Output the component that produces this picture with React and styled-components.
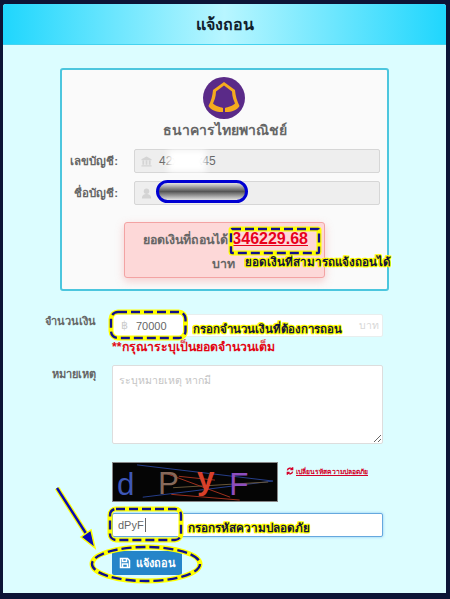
import React from "react";
import styled, { createGlobalStyle } from "styled-components";

const GlobalStyle = createGlobalStyle`
  html, body {
    margin: 0;
    padding: 0;
    background: #0c1436;
  }
  * {
    box-sizing: border-box;
  }
`;

const Page = styled.div`
  position: relative;
  width: 450px;
  height: 599px;
  padding: 4px 4px 6px 3px;
  overflow: hidden;
  font-family: "Liberation Sans", "Noto Sans", "DejaVu Sans", sans-serif;
`;

const Modal = styled.div`
  height: 100%;
  background: #dcfdff;
  border-radius: 3px 3px 0 0;
  overflow: hidden;
`;

const Header = styled.div`
  height: 41px;
  display: flex;
  align-items: center;
  justify-content: center;
  background: linear-gradient(90deg, #1fd6fd 0%, #b8f6ff 50%, #1fd6fd 100%);
  border-bottom: 1px solid #45d3ef;
  color: #10202c;
  font-size: 16px;
  font-weight: 700;
`;

const Card = styled.div`
  width: 329px;
  margin: 23px 0 0 57px;
  padding: 7px 7px 11px 0;
  background: #fafafa;
  border: 2px solid #4cc6de;
  border-radius: 3px;
`;

const Logo = styled.svg`
  display: block;
  width: 42px;
  height: 42px;
  margin: 0 auto;
  transform: translateX(3px);
`;

const BankName = styled.div`
  height: 20px;
  margin: 1px 0 9px;
  padding-left: 7px;
  text-align: center;
  color: #666;
  font-size: 14px;
  font-weight: 700;
  line-height: 20px;
`;

const InfoRow = styled.div`
  display: grid;
  grid-template-columns: 56px 1fr;
  column-gap: 16px;
  align-items: center;
  margin-bottom: 8px;
`;

const Label = styled.label`
  text-align: right;
  color: #666;
  font-size: 11.5px;
  font-weight: 700;
`;

const ReadOnlyBox = styled.div`
  position: relative;
  height: 24px;
  display: flex;
  align-items: center;
  gap: 7px;
  padding-left: 6px;
  background: #eee;
  border: 1px solid #d6d6d6;
  border-radius: 2px;
  color: #666;
  font-size: 12px;
`;

const FadedIcon = styled.svg`
  width: 11px;
  height: 11px;
  flex: none;
  fill: #d4d4d4;
`;

const WhiteSmudge = styled.div`
  position: absolute;
  left: 33px;
  top: 0;
  width: 38px;
  height: 22px;
  background: #fff;
  filter: blur(3px);
`;

const NameMask = styled.div`
  position: absolute;
  left: 21px;
  top: -2px;
  width: 92px;
  height: 23px;
  border: 3px solid #0000d2;
  border-radius: 12px;
  background: linear-gradient(180deg, #e4e4e4 0%, #555 50%, #e4e4e4 100%);
`;

const Alert = styled.div`
  position: relative;
  width: 201px;
  height: 56px;
  margin: 17px 0 0 62px;
  padding: 7px 0 0 0;
  background: #fdd8d8;
  border: 1px solid #f3a3a3;
  border-radius: 3px;
  box-shadow: 0 3px 8px rgba(240, 120, 120, 0.35);
  color: #666;
  font-size: 12.4px;
  font-weight: 700;
`;

const Balance = styled.a`
  margin-left: 4px;
  color: #e8001c;
  font-size: 16px;
  font-weight: 700;
  text-decoration: underline;
`;

const AlertLine = styled.div`
  display: flex;
  justify-content: flex-end;
  align-items: baseline;
  height: ${(p) => p.$height}px;
  padding-right: ${(p) => p.$right}px;
  white-space: nowrap;
`;

const Hint = styled.span`
  color: #14143c;
  font-size: ${(p) => p.$size}px;
  font-weight: 700;
  white-space: nowrap;
  text-shadow: 1px 0 0 #ff0, -1px 0 0 #ff0, 0 1px 0 #ff0, 0 -1px 0 #ff0,
    1px 1px 0 #ff0, -1px -1px 0 #ff0, 1px -1px 0 #ff0, -1px 1px 0 #ff0;
`;

const FloatingHint = styled(Hint)`
  position: absolute;
  left: ${(p) => p.$left}px;
  top: ${(p) => p.$top}px;
`;

const Row = styled.div`
  display: grid;
  grid-template-columns: 93px 271px;
  column-gap: 16px;
  margin-top: ${(p) => p.$top}px;
`;

const FormLabel = styled(Label)`
  padding-top: ${(p) => p.$pad || 0}px;
  font-size: 11px;
  line-height: 14px;
`;

const Field = styled.div`
  position: relative;
`;

const InputGroup = styled.div`
  height: 23px;
  display: flex;
  align-items: center;
  padding: 0 3px 0 8px;
  background: #fff;
  border: 1px solid #e8eeee;
  border-radius: 2px;
  color: #666;
  font-size: 11px;
`;

const Baht = styled.span`
  width: 15px;
  color: #ccc;
`;

const Addon = styled.span`
  margin-left: auto;
  color: #d8d8d8;
  font-size: 10.5px;
`;

const Note = styled.div`
  height: 20px;
  color: #e30613;
  font-size: 12.3px;
  font-weight: 700;
  line-height: 20px;
`;

const Textarea = styled.textarea`
  display: block;
  width: 271px;
  height: 79px;
  padding: 6px 6px;
  background: #fff;
  border: 1px solid #ddd;
  border-radius: 2px;
  font-family: inherit;
  font-size: 10.5px;
  &::placeholder {
    color: #c4c4c4;
  }
`;

const CaptchaRow = styled.div`
  display: flex;
  gap: 8px;
`;

const CaptchaImage = styled.svg`
  display: block;
  width: 166px;
  height: 40px;
  flex: none;
  background: #050505;
  border: 1px solid #888;
`;

const CaptchaLetter = styled.text`
  font-family: "Liberation Sans Narrow", "Liberation Sans", sans-serif;
  font-size: 33px;
`;

const RefreshLink = styled.a`
  display: flex;
  align-items: center;
  gap: 2px;
  height: 16px;
  margin-top: 1px;
  color: #d4002a;
  font-size: 6.8px;
  font-weight: 700;
  text-decoration: underline;
  white-space: nowrap;
`;

const CaptchaInput = styled.div`
  height: 24px;
  display: flex;
  align-items: center;
  padding-left: 5px;
  background: #fff;
  border: 1px solid #66a8de;
  border-radius: 2px;
  box-shadow: 0 0 3px rgba(102, 175, 233, 0.7);
  color: #666;
  font-size: 11px;
`;

const Caret = styled.span`
  width: 1px;
  height: 14px;
  margin-left: 1px;
  background: #666;
`;

const SubmitButton = styled.button`
  display: flex;
  align-items: center;
  justify-content: center;
  gap: 5px;
  width: 70px;
  height: 24px;
  padding: 0;
  background: #2585c9;
  border: none;
  border-radius: 2px;
  color: #fff;
  font-family: inherit;
  font-size: 11px;
  font-weight: 700;
`;

const Markup = styled.svg`
  position: absolute;
  left: ${(p) => p.$left}px;
  top: ${(p) => p.$top}px;
  overflow: visible;
  pointer-events: none;
`;

// yellow stroke under a navy dashed one, the hand-drawn marks on the screenshot
const DashedBox = ({ left, top, width, height, radius = 5 }) => (
  <Markup $left={left} $top={top} width={width} height={height}>
    <rect x="0" y="0" width={width} height={height} rx={radius} fill="none" stroke="#ffff00" strokeWidth="5" />
    <rect x="0" y="0" width={width} height={height} rx={radius} fill="none" stroke="#10108c" strokeWidth="2.4" strokeDasharray="9 4" />
  </Markup>
);

const DashedEllipse = ({ left, top, width, height }) => (
  <Markup $left={left} $top={top} width={width} height={height}>
    <ellipse cx={width / 2} cy={height / 2} rx={width / 2} ry={height / 2} fill="none" stroke="#ffff00" strokeWidth="5" />
    <ellipse cx={width / 2} cy={height / 2} rx={width / 2} ry={height / 2} fill="none" stroke="#10108c" strokeWidth="2.4" strokeDasharray="10 4" />
  </Markup>
);

const App = () => {
  return (
    <Page>
      <GlobalStyle />
      <Modal>
        <Header>แจ้งถอน</Header>
        <Card>
          <Logo viewBox="0 0 42 42">
            <circle cx="21" cy="21" r="21" fill="#5a2a88" />
            <path
              fill="#f5ab1e"
              d="M21 5 L32 13 C32.5 19 34 24 36.5 29 C34 33 29 35 23 35 L19 35 C13 35 8 33 5.5 29 C8 24 9.5 19 10 13 Z"
            />
            <path
              fill="#5a2a88"
              d="M21 8.5 L29 14.5 C29 20 31 24 32 26.5 C30 29 25 30 22 31 L22 35 L20 35 L20 31 C17 30 12 29 10 26.5 C11 24 13 20 13 14.5 Z"
            />
          </Logo>
          <BankName>ธนาคารไทยพาณิชย์</BankName>
          <InfoRow>
            <Label>เลขบัญชี:</Label>
            <ReadOnlyBox>
              <FadedIcon viewBox="0 0 24 24">
                <path d="M12 1 L23 7 V9 H1 V7 Z M3 10 H7 V19 H3 Z M10 10 H14 V19 H10 Z M17 10 H21 V19 H17 Z M1 20 H23 V23 H1 Z" />
              </FadedIcon>
              42xxxxx45
              <WhiteSmudge />
            </ReadOnlyBox>
          </InfoRow>
          <InfoRow>
            <Label>ชื่อบัญชี:</Label>
            <ReadOnlyBox>
              <FadedIcon viewBox="0 0 24 24">
                <circle cx="12" cy="7" r="6" />
                <path d="M2 23 C2 15 7 13 12 13 C17 13 22 15 22 23 Z" />
              </FadedIcon>
              <NameMask />
            </ReadOnlyBox>
          </InfoRow>
          <Alert>
            <AlertLine $height={24} $right={16}>
              ยอดเงินที่ถอนได้<Balance>346229.68</Balance>
            </AlertLine>
            <AlertLine $height={20} $right={89}>บาท</AlertLine>
            <FloatingHint $left={120} $top={30} $size={11.6}>ยอดเงินที่สามารถแจ้งถอนได้</FloatingHint>
            <DashedBox left={106} top={6} width={88} height={24} radius={1} />
          </Alert>
        </Card>

        <Row $top={23}>
          <FormLabel>จำนวนเงิน</FormLabel>
          <Field>
            <InputGroup>
              <Baht>฿</Baht>
              70000
              <Addon>บาท</Addon>
            </InputGroup>
            <DashedBox left={-1.5} top={-2.5} width={74.5} height={26} radius={7} />
            <FloatingHint $left={81} $top={6} $size={11.4}>กรอกจำนวนเงินที่ต้องการถอน</FloatingHint>
            <Note>**กรุณาระบุเป็นยอดจำนวนเต็ม</Note>
          </Field>
        </Row>
        <Row $top={8}>
          <FormLabel $pad={2}>หมายเหตุ</FormLabel>
          <Textarea placeholder="ระบุหมายเหตุ หากมี" />
        </Row>
        <Row $top={18}>
          <span />
          <CaptchaRow>
            <CaptchaImage viewBox="0 0 166 40">
              <g fill="none" strokeWidth="1">
                <line x1="22" y1="2" x2="165" y2="19" stroke="#27408f" />
                <line x1="28" y1="36" x2="165" y2="19" stroke="#27408f" />
                <line x1="60" y1="26" x2="160" y2="20" stroke="#6d5a3a" />
                <line x1="50" y1="10" x2="120" y2="36" stroke="#a8321e" />
                <line x1="58" y1="33" x2="130" y2="39" stroke="#a8321e" />
                <line x1="66" y1="14" x2="104" y2="18" stroke="#a8321e" />
              </g>
              <CaptchaLetter x="1" y="34" fill="#3e57b6">d</CaptchaLetter>
              <CaptchaLetter x="44" y="33" fill="#86695a">P</CaptchaLetter>
              <CaptchaLetter x="85" y="27" fill="#d8402a" fontWeight="700">y</CaptchaLetter>
              <CaptchaLetter x="119" y="34" fill="#8d4dbf">F</CaptchaLetter>
            </CaptchaImage>
            <RefreshLink>
              <svg width="8" height="8" viewBox="0 0 24 24" fill="none" stroke="#d4002a" strokeWidth="4">
                <path d="M4 10 A8.5 8.5 0 0 1 19 7" />
                <path d="M20 14 A8.5 8.5 0 0 1 5 17" />
                <path d="M20 1 V8 H13" />
                <path d="M4 23 V16 H11" />
              </svg>
              เปลี่ยนรหัสความปลอดภัย
            </RefreshLink>
          </CaptchaRow>
        </Row>
        <Row $top={11}>
          <span />
          <Field>
            <CaptchaInput>
              dPyF<Caret />
            </CaptchaInput>
            <DashedBox left={-2} top={-4} width={71} height={31} radius={6} />
            <FloatingHint $left={76} $top={6} $size={11.7}>กรอกรหัสความปลอดภัย</FloatingHint>
          </Field>
        </Row>
        <Row $top={14}>
          <span />
          <Field>
            <SubmitButton>
              <svg width="12" height="12" viewBox="0 0 24 24" fill="none" stroke="#fff" strokeWidth="3">
                <path d="M3 3 H17 L21 7 V21 H3 Z" />
                <path d="M7 3 V9 H15 V3 M7 21 V14 H17 V21" />
              </svg>
              แจ้งถอน
            </SubmitButton>
            <DashedEllipse left={-20} top={-4} width={108} height={34} />
          </Field>
        </Row>
      </Modal>
      <Markup $left={0} $top={0} width="450" height="599" viewBox="0 0 450 599">
        <path d="M57 488 L87 535" stroke="#ffff00" strokeWidth="5" fill="none" />
        <path d="M57 488 L87 535" stroke="#0a0ab4" strokeWidth="2.5" fill="none" />
        <path d="M95 548 L81 537 L91 530 Z" fill="#0a0ab4" stroke="#ffff00" strokeWidth="1.5" />
      </Markup>
    </Page>
  );
};

export default App;
